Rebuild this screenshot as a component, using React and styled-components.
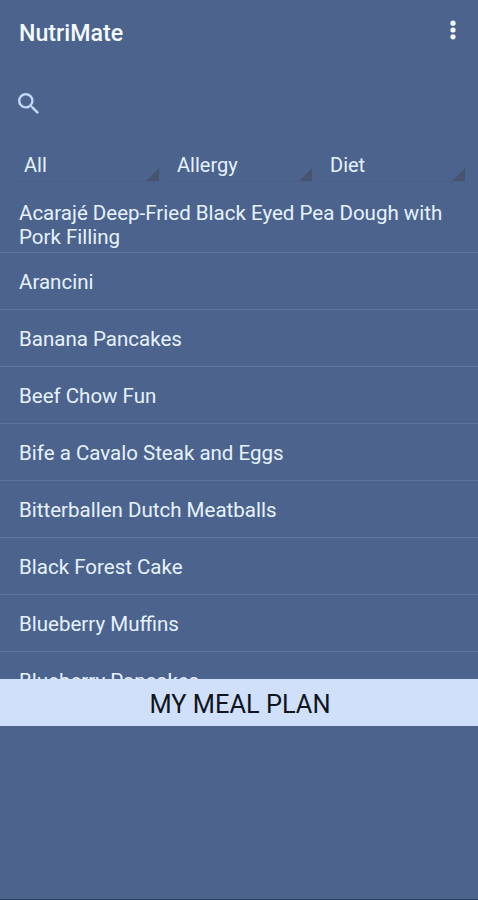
import React, { Component } from 'react';
import styled, { createGlobalStyle } from 'styled-components';

const GlobalStyle = createGlobalStyle`
  body {
    margin: 0;
    background: #4c648d;
  }
`

const Screen = styled.div`
  display: flex;
  flex-direction: column;
  box-sizing: border-box;
  width: 100%;
  height: 100vh;
  overflow: hidden;
  background: #4c648d;
  border-bottom: 1px solid #2c4164;
  color: #e6f2ff;
  font-family: Roboto, sans-serif;
  font-size: 20px;
`

const Header = styled.header`
  display: flex;
  flex: none;
  justify-content: space-between;
  box-sizing: border-box;
  height: 76px;
  padding: 19px 20px 0 19px;
`

const Title = styled.h1`
  margin: 0;
  color: #f4faff;
  font-size: 23.2px;
  font-weight: 500;
  line-height: 28px;
`

const MenuButton = styled.button`
  display: flex;
  width: 10px;
  height: 22px;
  padding: 0;
  background: none;
  border: 0;
`

const Search = styled.div`
  display: flex;
  flex: none;
  align-items: center;
  height: 55px;
  padding-left: 17.5px;
`

const Filters = styled.div`
  display: grid;
  flex: none;
  grid-template-columns: repeat(3, 153px);
  height: 65px;
  padding-left: 16px;
`

const Filter = styled.div`
  display: flex;
  align-items: flex-end;
  justify-content: space-between;
  box-sizing: border-box;
  width: 143px;
  height: 51px;
  padding-left: 8px;
  border-bottom: 1px solid #485f88;
`

const FilterLabel = styled.span`
  padding-bottom: 4px;
  line-height: 24px;
`

const Corner = styled.svg`
  display: block;
  width: 13px;
  height: 13px;
  fill: #48546f;
`

const List = styled.ul`
  flex: none;
  height: 483px;
  margin: 0;
  padding: 0;
  overflow: hidden;
  font-size: 20.53px;
  list-style: none;
`

const Item = styled.li`
  display: flex;
  align-items: center;
  box-sizing: border-box;
  height: 57px;
  padding: 1px 20px 0 19px;
  border-bottom: 1px solid #5b74a0;
  line-height: 24px;
`

const PlanButton = styled.button`
  flex: none;
  width: 100%;
  height: 47px;
  padding: 3px 0 0 2px;
  background: #d0e0fa;
  border: 0;
  color: #10151c;
  font-family: inherit;
  font-size: 25.4px;
  line-height: 30px;
`

const filters = ['All', 'Allergy', 'Diet'];

const recipes = [
  'Acarajé Deep-Fried Black Eyed Pea Dough with Pork Filling',
  'Arancini',
  'Banana Pancakes',
  'Beef Chow Fun',
  'Bife a Cavalo Steak and Eggs',
  'Bitterballen Dutch Meatballs',
  'Black Forest Cake',
  'Blueberry Muffins',
  'Blueberry Pancakes'
];

class App extends Component {
  render() {
    return (
      <Screen>
        <GlobalStyle />
        <Header>
          <Title>NutriMate</Title>
          <MenuButton aria-label="More options">
            <svg width="10" height="22" viewBox="0 0 10 22" fill="#f4faff">
              <circle cx="5" cy="4.2" r="2.6" />
              <circle cx="5" cy="11" r="2.6" />
              <circle cx="5" cy="17.8" r="2.6" />
            </svg>
          </MenuButton>
        </Header>

        <Search>
          <svg width="21" height="21" viewBox="3 3 17.49 17.49" fill="#c5d8fa">
            <path d="M15.5 14h-.79l-.28-.27A6.471 6.471 0 0 0 16 9.5 6.5 6.5 0 1 0 9.5 16c1.61 0 3.09-.59 4.23-1.57l.27.28v.79l5 4.99L20.49 19l-4.99-5zm-6 0C7.01 14 5 11.99 5 9.5S7.01 5 9.5 5 14 7.01 14 9.5 11.99 14 9.5 14z" />
          </svg>
        </Search>

        <Filters>
          {filters.map(name => (
            <Filter key={name}>
              <FilterLabel>{name}</FilterLabel>
              <Corner viewBox="0 0 13 13">
                <path d="M13 0v13H0z" />
              </Corner>
            </Filter>
          ))}
        </Filters>

        <List>
          {recipes.map(name => <Item key={name}>{name}</Item>)}
        </List>

        <PlanButton>MY MEAL PLAN</PlanButton>
      </Screen>
    )
  }
}

export default App;
